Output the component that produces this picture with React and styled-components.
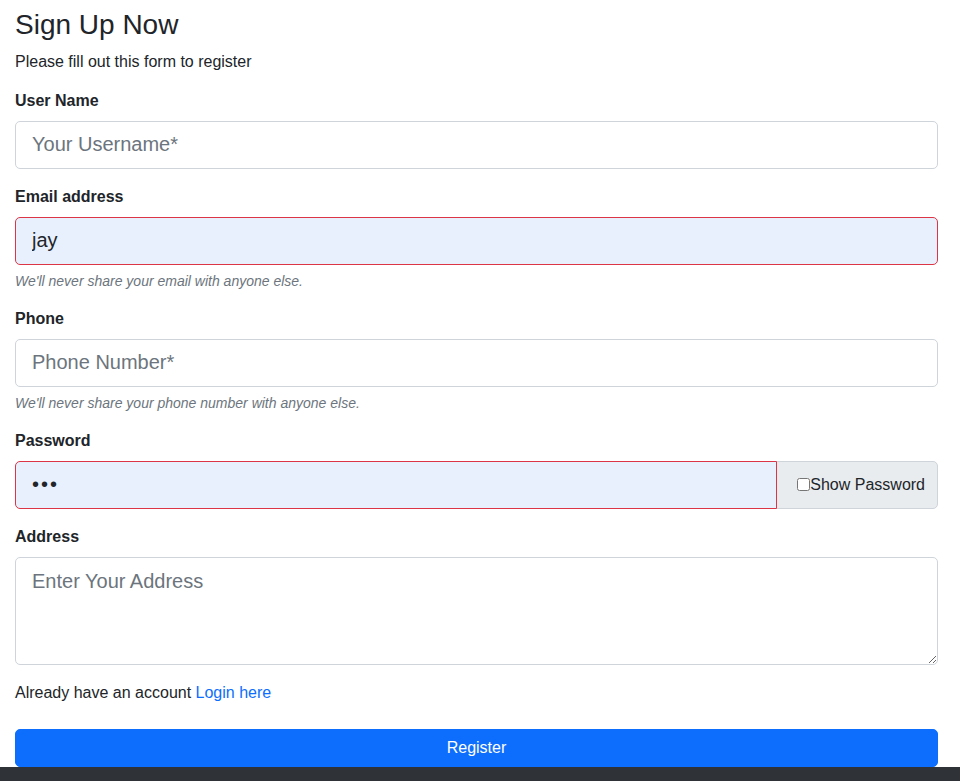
import React, { useState } from 'react';
import styled, { createGlobalStyle } from 'styled-components';

const GlobalStyle = createGlobalStyle`
    * {
        box-sizing: border-box;
    }
    body {
        margin: 0;
        background: #fff;
        color: #212529;
        font-family: "Liberation Sans", Arial, sans-serif;
        font-size: 16px;
        line-height: 1.5;
    }
`;

function App() {
    const [showPassword, setShowPassword] = useState(false);

    return (
        <Page>
            <GlobalStyle />
            <Title>Sign Up Now</Title>
            <Intro>Please fill out this form to register</Intro>

            <Field>
                <Label htmlFor="username">User Name</Label>
                <Input id="username" type="text" placeholder="Your Username*" />
            </Field>

            <Field>
                <Label htmlFor="email">Email address</Label>
                <Input id="email" type="text" defaultValue="jay" $invalid $filled />
                <Help>We'll never share your email with anyone else.</Help>
            </Field>

            <Field>
                <Label htmlFor="phone">Phone</Label>
                <Input id="phone" type="text" placeholder="Phone Number*" />
                <Help>We'll never share your phone number with anyone else.</Help>
            </Field>

            <Field>
                <Label htmlFor="password">Password</Label>
                <InputGroup>
                    <GroupInput
                        id="password"
                        type={showPassword ? 'text' : 'password'}
                        defaultValue="abc"
                        $invalid
                        $filled
                        $masked={!showPassword}
                    />
                    <GroupText>
                        <Check
                            type="checkbox"
                            checked={showPassword}
                            onChange={(e) => setShowPassword(e.target.checked)}
                        />
                        Show Password
                    </GroupText>
                </InputGroup>
            </Field>

            <Field>
                <Label htmlFor="address">Address</Label>
                <TextArea id="address" rows={3} placeholder="Enter Your Address" />
            </Field>

            <Already>
                Already have an account <LoginLink href="#">Login here</LoginLink>
            </Already>

            <Button type="button">Register</Button>

            <Footer />
        </Page>
    );
}

const Page = styled.div`
    padding: 8px 22px 40px 15px;
`;

const Title = styled.h3`
    margin: 0 0 8px;
    font-size: 28px;
    font-weight: 500;
    line-height: 1.2;
`;

const Intro = styled.p`
    margin: 0 0 15px;
`;

const Field = styled.div`
    margin-bottom: 16px;
`;

const Label = styled.label`
    display: inline-block;
    margin-bottom: 8px;
    font-weight: 700;
`;

const Input = styled.input`
    display: block;
    width: 100%;
    height: 48px;
    padding: 8px 16px;
    font-family: inherit;
    font-size: 20px;
    line-height: 1.5;
    letter-spacing: ${(p) => (p.$masked ? '2px' : 'normal')};
    color: #212529;
    background-color: ${(p) => (p.$filled ? '#e8f0fe' : '#fff')};
    border: 1px solid ${(p) => (p.$invalid ? '#dc3545' : '#ced4da')};
    border-radius: 5px;
    outline: none;

    &::placeholder {
        color: #6c757d;
    }
`;

const Help = styled.small`
    display: block;
    margin-top: 6px;
    font-size: 14px;
    line-height: 20px;
    font-style: italic;
    color: #6c757d;
`;

const InputGroup = styled.div`
    display: flex;
    align-items: stretch;
    width: 100%;
`;

const GroupInput = styled(Input)`
    flex: 1;
    min-width: 0;
    width: auto;
    border-top-right-radius: 0;
    border-bottom-right-radius: 0;
    position: relative;
    z-index: 1;
`;

const GroupText = styled.label`
    display: flex;
    align-items: center;
    margin-left: -1px;
    padding: 0 12px 0 16px;
    font-size: 16px;
    color: #212529;
    background-color: #e9ecef;
    border: 1px solid #ced4da;
    border-radius: 0 5px 5px 0;
    white-space: nowrap;
`;

const Check = styled.input`
    width: 13px;
    height: 13px;
    margin: 0 0 0 4px;
`;

const TextArea = styled.textarea`
    display: block;
    width: 100%;
    height: 108px;
    padding: 8px 16px;
    font-family: inherit;
    font-size: 20px;
    line-height: 1.5;
    color: #212529;
    border: 1px solid #ced4da;
    border-radius: 5px;
    outline: none;
    resize: vertical;

    &::placeholder {
        color: #6c757d;
    }
`;

const Already = styled.p`
    margin: 0 0 24px;
`;

const LoginLink = styled.a`
    color: #0d6efd;
    text-decoration: none;
`;

const Button = styled.button`
    display: block;
    width: 100%;
    height: 38px;
    padding: 6px 12px;
    font-family: inherit;
    font-size: 16px;
    color: #fff;
    background-color: #0d6efd;
    border: 1px solid #0d6efd;
    border-radius: 5px;
    cursor: pointer;
`;

const Footer = styled.footer`
    position: fixed;
    left: 0;
    right: 0;
    bottom: 0;
    height: 14px;
    background-color: #2f3236;
`;

export default App;
